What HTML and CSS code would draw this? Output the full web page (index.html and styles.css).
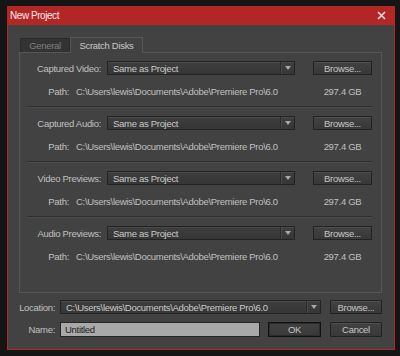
FILE: index.html
```html
<!DOCTYPE html>
<html>
<head>
<meta charset="utf-8">
<link rel="stylesheet" href="styles.css">
</head>
<body>
<div class="window">
  <div class="titlebar">
    <span class="title">New Project</span>
    <svg class="close" width="9" height="9" viewBox="0 0 9 9"><path d="M1 1L8 8M8 1L1 8" stroke="#f2dede" stroke-width="1.6"/></svg>
  </div>
  <div class="content">
    <div class="tabs">
      <div class="tab inactive">General</div>
      <div class="tab active">Scratch Disks</div>
    </div>
    <div class="panel">
      <div class="group">
        <div class="row">
          <span class="label">Captured Video:</span>
          <div class="select wide"><span class="val">Same as Project</span><span class="arrow"></span></div>
          <div class="btn browse">Browse...</div>
        </div>
        <div class="prow">
          <span class="plabel">Path:</span>
          <span class="path">C:\Users\lewis\Documents\Adobe\Premiere Pro\6.0</span>
          <span class="size">297.4 GB</span>
        </div>
      </div>
      <div class="sep"></div>
      <div class="group">
        <div class="row">
          <span class="label">Captured Audio:</span>
          <div class="select wide"><span class="val">Same as Project</span><span class="arrow"></span></div>
          <div class="btn browse">Browse...</div>
        </div>
        <div class="prow">
          <span class="plabel">Path:</span>
          <span class="path">C:\Users\lewis\Documents\Adobe\Premiere Pro\6.0</span>
          <span class="size">297.4 GB</span>
        </div>
      </div>
      <div class="sep"></div>
      <div class="group">
        <div class="row">
          <span class="label">Video Previews:</span>
          <div class="select wide"><span class="val">Same as Project</span><span class="arrow"></span></div>
          <div class="btn browse">Browse...</div>
        </div>
        <div class="prow">
          <span class="plabel">Path:</span>
          <span class="path">C:\Users\lewis\Documents\Adobe\Premiere Pro\6.0</span>
          <span class="size">297.4 GB</span>
        </div>
      </div>
      <div class="sep"></div>
      <div class="group">
        <div class="row">
          <span class="label">Audio Previews:</span>
          <div class="select wide"><span class="val">Same as Project</span><span class="arrow"></span></div>
          <div class="btn browse">Browse...</div>
        </div>
        <div class="prow">
          <span class="plabel">Path:</span>
          <span class="path">C:\Users\lewis\Documents\Adobe\Premiere Pro\6.0</span>
          <span class="size">297.4 GB</span>
        </div>
      </div>
    </div>
    <div class="brow loc">
      <span class="blabel">Location:</span>
      <div class="select locsel"><span class="val">C:\Users\lewis\Documents\Adobe\Premiere Pro\6.0</span><span class="arrow"></span></div>
      <div class="btn bbrowse">Browse...</div>
    </div>
    <div class="brow">
      <span class="blabel">Name:</span>
      <div class="input">Untitled</div>
      <div class="btn ok">OK</div>
      <div class="btn cancel">Cancel</div>
    </div>
  </div>
</div>
</body>
</html>
```

FILE: styles.css
```css
* { box-sizing: border-box; }
html, body { margin: 0; padding: 0; }
body {
  background: #151515;
  width: 400px;
  height: 356px;
  overflow: hidden;
  font-family: "Liberation Sans", Arial, sans-serif;
  font-size: 9.5px;
  letter-spacing: -0.3px;
  color: #c0c0c0;
}
.window {
  margin: 6px 0 0 7px;
  width: 388px;
  height: 344px;
  background: #424242;
  border: 1px solid #b52828;
  border-top: none;
  display: flex;
  flex-direction: column;
}
.titlebar {
  height: 19px;
  margin: 0 -1px;
  background: #b32626;
  display: flex;
  align-items: center;
  justify-content: space-between;
  padding: 0 9px 0 3px;
}
.title {
  color: #f6eaea;
  font-size: 10px;
  letter-spacing: -0.45px;
}
.close { display: block; }
.content {
  padding: 12px 0 0 11px;
  display: flex;
  flex-direction: column;
}
.tabs {
  display: flex;
  height: 15px;
  padding-left: 1px;
  align-items: flex-end;
}
.tab {
  height: 15px;
  display: flex;
  align-items: center;
  justify-content: center;
}
.tab.inactive {
  width: 50px;
  height: 14px;
  background: #333333;
  color: #808080;
  border: 1px solid #2a2a2a;
  border-bottom: none;
}
.tab.active {
  width: 73px;
  background: #424242;
  color: #c8c8c8;
  border: 1px solid #575757;
  border-bottom: none;
  margin-bottom: -1px;
  height: 16px;
  position: relative;
  z-index: 1;
}
.panel {
  width: 363px;
  height: 241px;
  border: 1px solid #565656;
  padding-top: 8px;
  display: flex;
  flex-direction: column;
}
.group { display: flex; flex-direction: column; }
.row {
  display: flex;
  align-items: center;
  height: 14px;
}
.label {
  width: 81px;
  text-align: right;
  margin-right: 6px;
  white-space: nowrap;
}
.select {
  height: 14px;
  background: linear-gradient(#3e3e3e, #363636);
  border: 1px solid #232323;
  box-shadow: inset 0 1px 0 #4a4a4a;
  display: flex;
  align-items: center;
  color: #cacaca;
  position: relative;
}
.select .val {
  flex: 1;
  padding-left: 5px;
  white-space: nowrap;
  overflow: hidden;
}
.select .arrow {
  width: 14px;
  height: 12px;
  border-left: 1px solid #2a2a2a;
  box-shadow: inset 1px 0 0 #4a4a4a;
  position: relative;
}
.select .arrow::after {
  content: "";
  position: absolute;
  left: 4px;
  top: 4px;
  border-left: 3px solid transparent;
  border-right: 3px solid transparent;
  border-top: 4px solid #a8a8a8;
}
.wide { width: 188px; }
.btn {
  height: 14px;
  background: linear-gradient(#424242, #383838);
  border: 1px solid #222222;
  box-shadow: inset 0 1px 0 #4e4e4e;
  color: #c6c6c6;
  display: flex;
  align-items: center;
  justify-content: center;
}
.browse { width: 59px; margin-left: 18px; }
.prow {
  display: flex;
  align-items: center;
  height: 14px;
  margin-top: 9px;
}
.plabel {
  width: 49px;
  text-align: right;
  margin-right: 7px;
}
.path { width: 237px; white-space: nowrap; }
.size { width: 59px; text-align: center; }
.sep {
  margin: 8px 9px 8px 7px;
  height: 2px;
  border-top: 1px solid #2e2e2e;
  border-bottom: 1px solid #4c4c4c;
}
.brow {
  display: flex;
  align-items: center;
  height: 14px;
}
.loc { margin-top: 7px; }
.brow + .brow { margin-top: 8px; }
.blabel {
  width: 36px;
  display: flex;
  justify-content: flex-end;
  margin-right: 5px;
  white-space: nowrap;
}
.locsel { width: 261px; }
.bbrowse { width: 52px; margin-left: 9px; }
.input {
  width: 200px;
  height: 15px;
  background: #a9a9a9;
  border: 1px solid #262626;
  color: #1c1c1c;
  padding-left: 4px;
  display: flex;
  align-items: center;
}
.ok {
  width: 53px;
  height: 15px;
  margin-left: 8px;
  border: 1px solid #111;
  box-shadow: inset 0 0 0 1px #2c2c2c;
}
.cancel { width: 52px; height: 15px; margin-left: 9px; }
```
